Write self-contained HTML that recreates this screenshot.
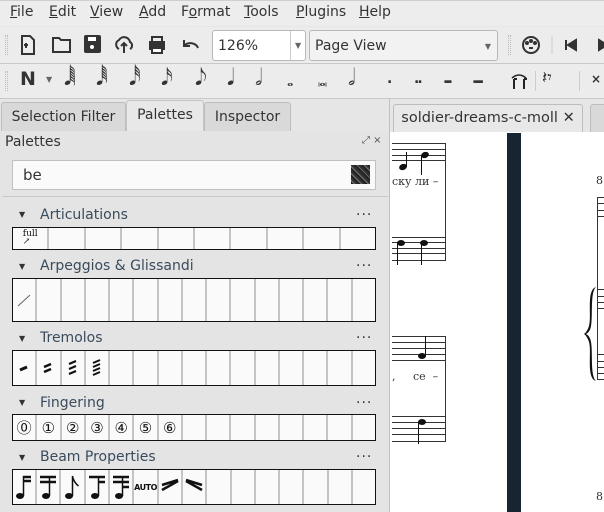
<!DOCTYPE html>
<html><head><meta charset="utf-8"><style>
*{margin:0;padding:0;box-sizing:border-box}
body{width:604px;height:512px;overflow:hidden;background:#e6e6e6;font-family:"DejaVu Sans","Liberation Sans",sans-serif;position:relative;color:#333}
.a{position:absolute}
.menu{top:0;left:0;width:604px;height:26px;background:#ededed;border-top:1px solid #cfcfcf;font-size:14px;color:#333}
.menu span{position:absolute;top:3px}
.tb{left:0;width:604px;background:#ececec;border-bottom:1px solid #c8c8c8}
.ic{position:absolute;font-size:17px;color:#333;line-height:1}
.grip{position:absolute;width:3px;border-left:1px dotted #bbb;border-right:1px dotted #bbb}
.combo{position:absolute;background:#fff;border:1px solid #b8b8b8;border-radius:3px;font-size:14px;padding:7px 5px}
.combo.g{background:#f2f2f2}
.tab{position:absolute;border:1px solid #bdbdbd;border-bottom:none;background:#d9d9d9;font-size:14px;text-align:center;padding-top:6px;border-radius:3px 3px 0 0}
.title{position:absolute;left:40px;font-size:14px;color:#3a4b5c}
.tri{position:absolute;left:19px;font-size:8px;color:#333}
.dots{position:absolute;left:356px;font-size:14px;letter-spacing:1px;color:#333}
.box{position:absolute;left:12px;width:364px;border:1px solid #111;background:#fafafa;display:flex}
.box div{flex:1;border-right:2px solid #c4c4c4;font-family:"DejaVu Serif",serif;font-size:15px;display:flex;align-items:center;justify-content:center;color:#111}
.box div:last-child{border-right:none}
.staff{position:absolute;height:1px;background:#333}
</style></head><body>
<div class="a menu">
<span style="left:10px"><u>F</u>ile</span><span style="left:49px"><u>E</u>dit</span><span style="left:90px"><u>V</u>iew</span><span style="left:139px"><u>A</u>dd</span><span style="left:181px">F<u>o</u>rmat</span><span style="left:244px"><u>T</u>ools</span><span style="left:296px"><u>P</u>lugins</span><span style="left:359px"><u>H</u>elp</span>
</div>
<div class="a tb" style="top:27px;height:37px">
<div class="grip" style="left:5px;top:8px;height:20px"></div>
<svg class="a" style="left:0;top:0" width="240" height="37" fill="none" stroke="#333" stroke-width="2">
<path d="M22 9h8l4 4v14h-12z M28 18h-4 M26 16v5"/>
<path d="M53 11h6l2 2h9v12h-17z"/>
<rect x="85" y="9" width="15" height="16" rx="1" fill="#333"/><rect x="88" y="10" width="8" height="4" fill="#fff" stroke="none"/><circle cx="92" cy="20" r="2" fill="#fff" stroke="none"/>
<path d="M119 22a5 5 0 0 1 0-9a6 6 0 0 1 11 2a4 4 0 0 1 0 7 M124 26v-9 M121 19l3-3 3 3"/>
<rect x="150" y="15" width="14" height="7" fill="#333"/><rect x="152" y="10" width="10" height="5"/><rect x="152" y="21" width="10" height="5" fill="#fff"/>
<path d="M184 13v6h6 M184 19a8 7 0 0 1 14 2"/>
<path d="M228 13v6h-6 M228 19a8 7 0 0 0-14 2" stroke="#bbb"/>
</svg>
<div class="combo" style="left:212px;top:3px;width:94px;height:31px">126%</div>
<div class="a" style="left:290px;top:4px;width:1px;height:29px;background:#ccc"></div>
<div class="a" style="left:295px;top:14px;font-size:8px;color:#666">▼</div>
<div class="combo g" style="left:309px;top:3px;width:189px;height:31px">Page View<span style="position:absolute;right:6px;top:11px;font-size:8px;color:#666">▼</span></div>
<div class="grip" style="left:508px;top:8px;height:20px"></div>
<svg class="a" style="left:520px;top:6px" width="84" height="26" fill="none" stroke="#333" stroke-width="2"><circle cx="11" cy="12" r="8"/><circle cx="7" cy="10" r="1" fill="#333"/><circle cx="11" cy="8" r="1" fill="#333"/><circle cx="15" cy="10" r="1" fill="#333"/><path d="M9 15h4"/><path d="M32 3v18" stroke="#ccc" stroke-width="1"/><path d="M46 7v10" /><path d="M56 7l-8 5 8 5z" fill="#333"/><path d="M79 7l8 5-8 5z" fill="#333"/></svg>
</div>
<div class="a tb" style="top:64px;height:35px">
<div class="grip" style="left:5px;top:7px;height:20px"></div>
<div class="ic" style="left:20px;top:6px;font-size:19px;font-weight:bold;font-family:'DejaVu Sans'">N</div>
<div class="ic" style="left:46px;top:12px;font-size:8px;color:#666">▼</div>
<div class="ic" style="left:64px;top:3px;font-size:23px">𝅘𝅥𝅲</div>
<div class="ic" style="left:96px;top:3px;font-size:23px">𝅘𝅥𝅱</div>
<div class="ic" style="left:129px;top:3px;font-size:23px">𝅘𝅥𝅰</div>
<div class="ic" style="left:161px;top:3px;font-size:23px">𝅘𝅥𝅯</div>
<div class="ic" style="left:195px;top:3px;font-size:23px">𝅘𝅥𝅮</div>
<div class="ic" style="left:227px;top:3px;font-size:23px">𝅘𝅥</div>
<div class="ic" style="left:255px;top:3px;font-size:23px">𝅗𝅥</div>
<div class="ic" style="left:287px;top:9px;font-size:16px">𝅝</div>
<div class="ic" style="left:318px;top:9px;font-size:16px">𝅜</div>
<div class="ic" style="left:348px;top:3px;font-size:23px">𝅗𝅥</div>
<div class="ic" style="left:387px;top:8px;font-size:14px;font-weight:bold">.</div>
<div class="ic" style="left:414px;top:8px;font-size:14px;font-weight:bold;letter-spacing:-2px">..</div>
<div class="ic" style="left:443px;top:8px;font-size:14px;font-weight:bold;letter-spacing:-3px">...</div>
<div class="ic" style="left:472px;top:8px;font-size:14px;font-weight:bold;letter-spacing:-3px">....</div>
<svg class="a" style="left:508px;top:6px" width="22" height="22" fill="#222" stroke="#222" stroke-width="2"><path d="M4 8q7-6 14 0" fill="none" stroke-width="1.5"/><path d="M6 9v10M16 9v10" /><path d="M6 9h3M16 9h3" /></svg>
<div class="a" style="left:535px;top:7px;width:1px;height:20px;background:#ccc"></div>
<div class="ic" style="left:542px;top:6px;font-size:17px">𝄽𝄾</div>
<div class="a" style="left:579px;top:7px;width:1px;height:20px;background:#ccc"></div>
<div class="ic" style="left:591px;top:9px;font-size:12px;font-weight:bold">×</div>
</div>
<div class="tab" style="left:1px;top:102px;width:125px;height:29px">Selection Filter</div>
<div class="tab" style="left:126px;top:100px;width:78px;height:31px;background:#e8e8e8;border-color:#c4c4c4">Palettes</div>
<div class="tab" style="left:204px;top:102px;width:87px;height:29px">Inspector</div>
<div class="a" style="left:0;top:131px;width:390px;height:381px;background:#e4e4e4"></div>
<div class="a" style="left:5px;top:134px;font-size:14px">Palettes</div>
<div class="a" style="left:362px;top:135px;font-size:10px;color:#555">⤢ ×</div>
<div class="a" style="left:12px;top:160px;width:364px;height:30px;background:#fafafa;border:1px solid #c0c0c0;font-size:15px;padding:5px 10px">be</div>
<div class="a" style="left:351px;top:165px;width:19px;height:19px;background:repeating-linear-gradient(45deg,#222 0 2px,#777 2px 3px,#333 3px 5px)"></div>
<div class="a" style="left:2px;top:196px;width:386px;height:1px;background:#c8c8c8"></div>

<div class="tri" style="top:210px">▼</div><div class="title" style="top:207px">Articulations</div><div class="dots" style="top:207px">···</div>
<div class="box" style="top:227px;height:23px"><div style="font-size:9px;line-height:8px;align-items:flex-start;padding-top:2px">full<br>↗</div><div></div><div></div><div></div><div></div><div></div><div></div><div></div><div></div><div></div></div>

<div class="tri" style="top:262px">▼</div><div class="title" style="top:258px">Arpeggios &amp; Glissandi</div><div class="dots" style="top:258px">···</div>
<div class="box" style="top:278px;height:44px"><div><svg width="14" height="14"><path d="M1 13L13 2" stroke="#666"/></svg></div><div></div><div></div><div></div><div></div><div></div><div></div><div></div><div></div><div></div><div></div><div></div><div></div><div></div><div></div></div>

<div class="tri" style="top:334px">▼</div><div class="title" style="top:330px">Tremolos</div><div class="dots" style="top:330px">···</div>
<div class="box" style="top:350px;height:36px">
<div><svg width="14" height="20"><path d="M3 12l7-3" stroke="#111" stroke-width="3"/></svg></div>
<div><svg width="14" height="20"><path d="M3 9l7-3M3 14l7-3" stroke="#111" stroke-width="2.5"/></svg></div>
<div><svg width="14" height="20"><path d="M3 6l7-3M3 11l7-3M3 16l7-3" stroke="#111" stroke-width="2.2"/></svg></div>
<div><svg width="14" height="20"><path d="M3 5l7-3M3 9l7-3M3 13l7-3M3 17l7-3" stroke="#111" stroke-width="2"/></svg></div>
<div></div><div></div><div></div><div></div><div></div><div></div><div></div><div></div><div></div><div></div><div></div></div>

<div class="tri" style="top:398px">▼</div><div class="title" style="top:395px">Fingering</div><div class="dots" style="top:395px">···</div>
<div class="box" style="top:414px;height:27px"><div>⓪</div><div>①</div><div>②</div><div>③</div><div>④</div><div>⑤</div><div>⑥</div><div></div><div></div><div></div><div></div><div></div><div></div><div></div><div></div></div>

<div class="tri" style="top:453px">▼</div><div class="title" style="top:449px">Beam Properties</div><div class="dots" style="top:449px">···</div>
<div class="box" style="top:469px;height:36px">
<div><svg width="18" height="28"><ellipse cx="5" cy="23" rx="4" ry="3" fill="#111"/><path d="M8.5 23V3" stroke="#111" stroke-width="1.5"/><path d="M8 4h8M8 8h8" stroke="#111" stroke-width="2.5"/></svg></div>
<div><svg width="20" height="28"><ellipse cx="8" cy="23" rx="4" ry="3" fill="#111"/><path d="M11.5 23V3" stroke="#111" stroke-width="1.5"/><path d="M2 4h16M2 9h16" stroke="#111" stroke-width="2.5"/></svg></div>
<div><svg width="18" height="28"><ellipse cx="5" cy="23" rx="4" ry="3" fill="#111"/><path d="M8.5 23V3q1 6 6 10" stroke="#111" stroke-width="1.5" fill="none"/></svg></div>
<div><svg width="20" height="28"><ellipse cx="8" cy="23" rx="4" ry="3" fill="#111"/><path d="M11.5 23V3" stroke="#111" stroke-width="1.5"/><path d="M2 4h16M11 9h7" stroke="#111" stroke-width="2.5"/></svg></div>
<div><svg width="20" height="28"><ellipse cx="8" cy="23" rx="4" ry="3" fill="#111"/><path d="M11.5 23V3" stroke="#111" stroke-width="1.5"/><path d="M2 4h16M2 9h16M11 14h7" stroke="#111" stroke-width="2.5"/></svg></div>
<div style="font-family:'DejaVu Sans';font-size:8px;font-weight:bold;letter-spacing:-0.5px">AUTO</div>
<div><svg width="20" height="20"><path d="M2 8l16-5M2 13l16-9" stroke="#111" stroke-width="2.5"/></svg></div>
<div><svg width="20" height="20"><path d="M2 3l16 5M2 4l16 9" stroke="#111" stroke-width="2.5"/></svg></div>
<div></div><div></div><div></div><div></div><div></div><div></div><div></div></div>

<!-- score area -->
<div class="a" style="left:389px;top:99px;width:1px;height:413px;background:#c0c0c0"></div>
<div class="a" style="left:390px;top:99px;width:214px;height:413px;background:#e6e6e6"></div>
<div class="tab" style="left:393px;top:104px;width:190px;height:28px;background:#e8e8e8;font-size:14.5px;padding-top:5px">soldier-dreams-c-moll ✕</div>
<div class="tab" style="left:590px;top:104px;width:20px;height:28px"></div>
<div class="a" style="left:390px;top:132px;width:214px;height:380px;background:#fff"></div>
<div class="a" style="left:507px;top:133px;width:14px;height:379px;background:#172533"></div>
<div class="staff" style="left:392px;top:143px;width:53px"></div><div class="staff" style="left:392px;top:149px;width:53px"></div><div class="staff" style="left:392px;top:155px;width:53px"></div><div class="staff" style="left:392px;top:160px;width:53px"></div>
<div class="a" style="left:445px;top:143px;width:1px;height:118px;background:#333"></div>
<div class="a" style="left:392px;top:175px;font-family:'DejaVu Serif',serif;font-size:11px">ску ли –</div>
<div class="a" style="left:399px;top:164px;width:8px;height:6px;border-radius:50%;background:#111;transform:rotate(-20deg)"></div><div class="a" style="left:406px;top:152px;width:1px;height:15px;background:#111"></div>
<div class="a" style="left:421px;top:152px;width:8px;height:6px;border-radius:50%;background:#111;transform:rotate(-20deg)"></div><div class="a" style="left:421px;top:155px;width:1px;height:20px;background:#111"></div>
<div class="staff" style="left:392px;top:237px;width:53px"></div><div class="staff" style="left:392px;top:242px;width:53px"></div><div class="staff" style="left:392px;top:248px;width:53px"></div><div class="staff" style="left:392px;top:253px;width:53px"></div><div class="staff" style="left:392px;top:260px;width:53px"></div>
<div class="a" style="left:397px;top:240px;width:8px;height:6px;border-radius:50%;background:#111"></div><div class="a" style="left:397px;top:243px;width:1px;height:22px;background:#111"></div>
<div class="a" style="left:420px;top:240px;width:8px;height:6px;border-radius:50%;background:#111"></div><div class="a" style="left:421px;top:243px;width:1px;height:22px;background:#111"></div>
<div class="staff" style="left:392px;top:336px;width:53px"></div><div class="staff" style="left:392px;top:342px;width:53px"></div><div class="staff" style="left:392px;top:348px;width:53px"></div><div class="staff" style="left:392px;top:354px;width:53px"></div><div class="staff" style="left:392px;top:360px;width:53px"></div>
<div class="a" style="left:445px;top:336px;width:1px;height:106px;background:#333"></div>
<div class="a" style="left:418px;top:353px;width:8px;height:6px;border-radius:50%;background:#111"></div><div class="a" style="left:425px;top:336px;width:1px;height:20px;background:#111"></div>
<div class="a" style="left:392px;top:370px;font-family:'DejaVu Serif',serif;font-size:11px">,&nbsp;&nbsp;&nbsp;&nbsp;&nbsp;се&nbsp;&nbsp;–</div>
<div class="staff" style="left:392px;top:416px;width:53px"></div><div class="staff" style="left:392px;top:422px;width:53px"></div><div class="staff" style="left:392px;top:428px;width:53px"></div><div class="staff" style="left:392px;top:434px;width:53px"></div><div class="staff" style="left:392px;top:441px;width:53px"></div>
<div class="a" style="left:418px;top:419px;width:8px;height:6px;border-radius:50%;background:#111"></div><div class="a" style="left:418px;top:422px;width:1px;height:22px;background:#111"></div>
<div class="a" style="left:596px;top:174px;font-family:'DejaVu Serif',serif;font-size:11px">8</div>
<div class="a" style="left:597px;top:197px;width:1px;height:182px;background:#333"></div>
<div class="staff" style="left:597px;top:197px;width:7px"></div><div class="staff" style="left:597px;top:203px;width:7px"></div><div class="staff" style="left:597px;top:210px;width:7px"></div><div class="staff" style="left:597px;top:216px;width:7px"></div>
<div class="staff" style="left:597px;top:289px;width:7px"></div><div class="staff" style="left:597px;top:296px;width:7px"></div><div class="staff" style="left:597px;top:302px;width:7px"></div><div class="staff" style="left:597px;top:308px;width:7px"></div>
<div class="staff" style="left:597px;top:354px;width:7px"></div><div class="staff" style="left:597px;top:361px;width:7px"></div><div class="staff" style="left:597px;top:367px;width:7px"></div><div class="staff" style="left:597px;top:373px;width:7px"></div><div class="staff" style="left:597px;top:379px;width:7px"></div>
<svg class="a" style="left:582px;top:286px" width="16" height="96"><path d="M14 1C4 4 10 30 7 40Q5 46 2 48Q5 50 7 56C10 66 4 92 14 95C8 90 11 66 9 56Q8 50 4 48Q8 46 9 40C11 30 8 6 14 1Z" fill="#111"/></svg>
<div class="a" style="left:596px;top:490px;font-family:'DejaVu Serif',serif;font-size:11px">8</div>
</body></html>
